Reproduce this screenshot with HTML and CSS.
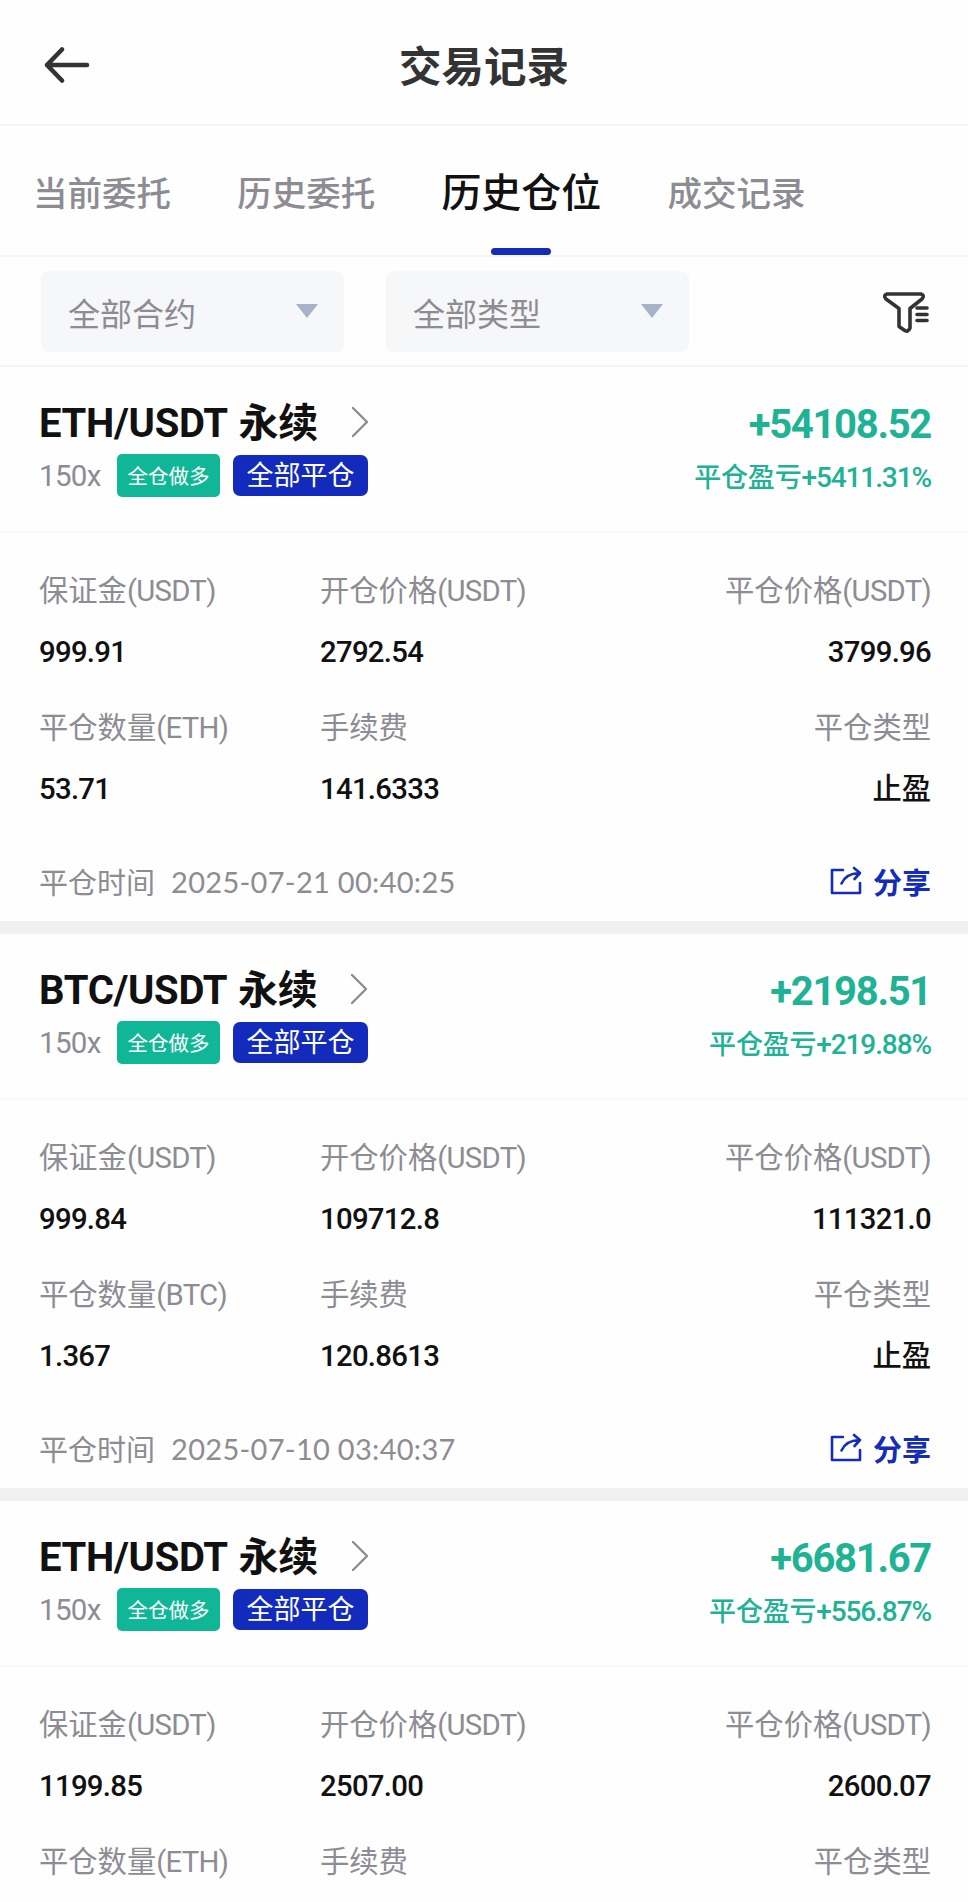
FILE: index.html
```html
<!DOCTYPE html>
<html lang="zh-CN">
<head>
  <meta charset="UTF-8">
  <meta name="viewport" content="width=device-width, initial-scale=1.0">
  <title>交易记录</title>
  <link rel="stylesheet" href="styles.css">
</head>
<body>

<header class="header">
  <svg class="back" width="48" height="40" viewBox="0 0 48 40">
    <path d="M19 4.5 L4 20 L19 35.5 M4 20 H44" />
  </svg>
  <h1>交易记录</h1>
</header>

<nav class="tabs">
  <a class="tab">当前委托</a>
  <a class="tab">历史委托</a>
  <a class="tab active">历史仓位</a>
  <a class="tab">成交记录</a>
</nav>

<div class="filters">
  <div class="select">全部合约<span class="arrow"></span></div>
  <div class="select">全部类型<span class="arrow"></span></div>
  <svg class="filter-icon" width="48" height="44" viewBox="0 0 48 44">
    <path d="M4 3 H38 Q42 4 39 8 L27 17.5 V37 Q25 42 21 39 L16 35.5 V17.5 L3 8 Q0 4 4 3 Z" />
    <path d="M34 17 H44 M34 23.5 H44 M34 29.5 H44" />
  </svg>
</div>

<section class="card">
  <div class="card-head">
    <div class="line">
      <h2>ETH/USDT <span class="cn">永续</span></h2>
      <svg class="chevron" width="20" height="32" viewBox="0 0 20 32"><path d="M3 2 L17 16 L3 30" /></svg>
      <span class="profit">+54108.52</span>
    </div>
    <div class="line sub">
      <span class="lever">150x</span>
      <span class="badge green">全仓做多</span>
      <span class="badge blue">全部平仓</span>
      <span class="rate"><span class="cn">平仓盈亏</span>+5411.31%</span>
    </div>
  </div>
  <div class="grid">
    <div class="cell"><span class="label">保证金<i>(USDT)</i></span><span class="value">999.91</span></div>
    <div class="cell"><span class="label">开仓价格<i>(USDT)</i></span><span class="value">2792.54</span></div>
    <div class="cell"><span class="label">平仓价格<i>(USDT)</i></span><span class="value">3799.96</span></div>
    <div class="cell"><span class="label">平仓数量<i>(ETH)</i></span><span class="value">53.71</span></div>
    <div class="cell"><span class="label">手续费</span><span class="value">141.6333</span></div>
    <div class="cell"><span class="label">平仓类型</span><span class="value type">止盈</span></div>
  </div>
  <div class="card-foot">
    <span>平仓时间</span>
    <span class="time">2025-07-21 00:40:25</span>
    <a class="share">
      <svg width="34" height="30" viewBox="0 0 34 30"><path d="M14 4 H3 V27 H31 V17 M12.5 17.5 Q17 7.5 30 7 M25 2 L31 7 L25.5 13" /></svg>
      分享
    </a>
  </div>
</section>

<section class="card">
  <div class="card-head">
    <div class="line">
      <h2>BTC/USDT <span class="cn">永续</span></h2>
      <svg class="chevron" width="20" height="32" viewBox="0 0 20 32"><path d="M3 2 L17 16 L3 30" /></svg>
      <span class="profit">+2198.51</span>
    </div>
    <div class="line sub">
      <span class="lever">150x</span>
      <span class="badge green">全仓做多</span>
      <span class="badge blue">全部平仓</span>
      <span class="rate"><span class="cn">平仓盈亏</span>+219.88%</span>
    </div>
  </div>
  <div class="grid">
    <div class="cell"><span class="label">保证金<i>(USDT)</i></span><span class="value">999.84</span></div>
    <div class="cell"><span class="label">开仓价格<i>(USDT)</i></span><span class="value">109712.8</span></div>
    <div class="cell"><span class="label">平仓价格<i>(USDT)</i></span><span class="value">111321.0</span></div>
    <div class="cell"><span class="label">平仓数量<i>(BTC)</i></span><span class="value">1.367</span></div>
    <div class="cell"><span class="label">手续费</span><span class="value">120.8613</span></div>
    <div class="cell"><span class="label">平仓类型</span><span class="value type">止盈</span></div>
  </div>
  <div class="card-foot">
    <span>平仓时间</span>
    <span class="time">2025-07-10 03:40:37</span>
    <a class="share">
      <svg width="34" height="30" viewBox="0 0 34 30"><path d="M14 4 H3 V27 H31 V17 M12.5 17.5 Q17 7.5 30 7 M25 2 L31 7 L25.5 13" /></svg>
      分享
    </a>
  </div>
</section>

<section class="card last">
  <div class="card-head">
    <div class="line">
      <h2>ETH/USDT <span class="cn">永续</span></h2>
      <svg class="chevron" width="20" height="32" viewBox="0 0 20 32"><path d="M3 2 L17 16 L3 30" /></svg>
      <span class="profit">+6681.67</span>
    </div>
    <div class="line sub">
      <span class="lever">150x</span>
      <span class="badge green">全仓做多</span>
      <span class="badge blue">全部平仓</span>
      <span class="rate"><span class="cn">平仓盈亏</span>+556.87%</span>
    </div>
  </div>
  <div class="grid">
    <div class="cell"><span class="label">保证金<i>(USDT)</i></span><span class="value">1199.85</span></div>
    <div class="cell"><span class="label">开仓价格<i>(USDT)</i></span><span class="value">2507.00</span></div>
    <div class="cell"><span class="label">平仓价格<i>(USDT)</i></span><span class="value">2600.07</span></div>
    <div class="cell"><span class="label">平仓数量<i>(ETH)</i></span></div>
    <div class="cell"><span class="label">手续费</span></div>
    <div class="cell"><span class="label">平仓类型</span></div>
  </div>
</section>

</body>
</html>
```
FILE: styles.css
```css
* {
  box-sizing: border-box;
}
body {
  margin: 0;
  background: #fefefe;
  color: #111;
  font-family: Roboto, "Noto Sans CJK SC", sans-serif;
}
h1, h2 {
  margin: 0;
}
svg {
  display: block;
  fill: none;
  stroke-linecap: round;
  stroke-linejoin: round;
}
.header {
  display: grid;
  grid-template-columns: 100px 1fr 100px;
  align-items: center;
  height: 126px;
  padding: 6px 0 0;
  border-bottom: 2px solid #f5f5f6;
}
.back {
  margin-left: 43px;
  stroke: #333;
  stroke-width: 4.6;
}
.header h1 {
  padding-top: 5px;
  font-size: 42.5px;
  line-height: 60px;
  color: #333;
  text-align: center;
}
.tabs {
  display: flex;
  align-items: stretch;
  gap: 66.2px;
  height: 131px;
  padding-left: 33px;
  border-bottom: 2px solid #f5f5f6;
}
.tab {
  display: flex;
  flex-direction: column;
  height: 129px;
  font-size: 34.5px;
  font-weight: 500;
  line-height: 136px;
  color: #8d8c93;
}
.tab.active {
  font-size: 40px;
  color: #111;
}
.tab.active::after {
  content: "";
  width: 60px;
  height: 8px;
  margin: -14px auto 0;
  border-radius: 4px;
  background: #142cb6;
}
.filters {
  display: flex;
  align-items: center;
  gap: 42px;
  height: 110px;
  padding: 1px 37px 0 41px;
  border-bottom: 2px solid #f5f5f6;
}
.select {
  display: flex;
  align-items: center;
  justify-content: space-between;
  width: 303px;
  height: 81px;
  padding: 1px 26px 0 27px;
  border-radius: 8px;
  background: #f6f7f9;
  font-size: 32px;
  color: #8d8c93;
}
.arrow {
  margin-top: -3px;
  border: 11px solid transparent;
  border-top: 14px solid #a6b1ca;
  border-bottom: 0;
}
.filter-icon {
  margin: 2px 0 0 auto;
  stroke: #333;
  stroke-width: 3.6;
}
.card {
  height: 567px;
  border-bottom: 13px solid #f0f0f0;
}
.card.last {
  height: auto;
  border-bottom: 0;
}
.card-head {
  height: 166px;
  padding: 33px 37px 0 39px;
  border-bottom: 2px solid #fafafa;
}
.line {
  display: flex;
  align-items: center;
  height: 48px;
}
.card h2 {
  font-size: 40px;
  line-height: 48px;
  letter-spacing: -0.3px;
}
.card h2 .cn {
  margin-left: 2px;
}
.chevron {
  margin: -5px 0 0 32px;
  stroke: #8d8c93;
  stroke-width: 2.4;
}
.profit {
  margin-left: auto;
  font-size: 40px;
  font-weight: 700;
  letter-spacing: -1.3px;
  color: #20b294;
}
.sub {
  height: 44px;
  margin-top: 5px;
}
.lever {
  width: 78px;
  padding-top: 2px;
  font-size: 29.5px;
  letter-spacing: -0.7px;
  color: #8d8c93;
}
.badge {
  color: #fff;
  text-align: center;
}
.green {
  width: 103px;
  height: 43px;
  border-radius: 5px;
  background: #10b797;
  font-size: 20.5px;
  line-height: 46px;
}
.blue {
  width: 135px;
  height: 41px;
  margin-left: 13px;
  border-radius: 7px;
  background: #122bbc;
  font-size: 27px;
  line-height: 43px;
}
.rate {
  margin-left: auto;
  font-size: 28px;
  font-weight: 500;
  letter-spacing: -1.1px;
  color: #20b294;
}
.rate .cn {
  font-size: 27px;
  letter-spacing: -0.2px;
}
.grid {
  display: grid;
  grid-template-columns: 281px 1fr 1fr;
  row-gap: 36px;
  padding: 38px 37px 0 39px;
}
.cell {
  display: flex;
  flex-direction: column;
  gap: 21px;
  font-size: 29.3px;
  line-height: 40px;
}
.cell:nth-child(3n) {
  align-items: flex-end;
}
.label {
  color: #8d8c93;
}
.label i {
  font-style: normal;
  letter-spacing: -0.7px;
}
.value {
  font-weight: 500;
  letter-spacing: -0.7px;
}
.value.type {
  letter-spacing: 0;
}
.card-foot {
  display: flex;
  align-items: center;
  height: 44px;
  margin-top: 50px;
  padding: 0 37px 0 39px;
  font-size: 29px;
  color: #8d8c93;
}
.time {
  margin-left: 16px;
  font-family: Lato, sans-serif;
  letter-spacing: 0.3px;
}
.share {
  display: flex;
  align-items: center;
  gap: 10px;
  margin-left: auto;
  font-weight: 700;
  color: #142cb6;
}
.share svg {
  stroke: #142cb6;
  stroke-width: 2.6;
}
```
